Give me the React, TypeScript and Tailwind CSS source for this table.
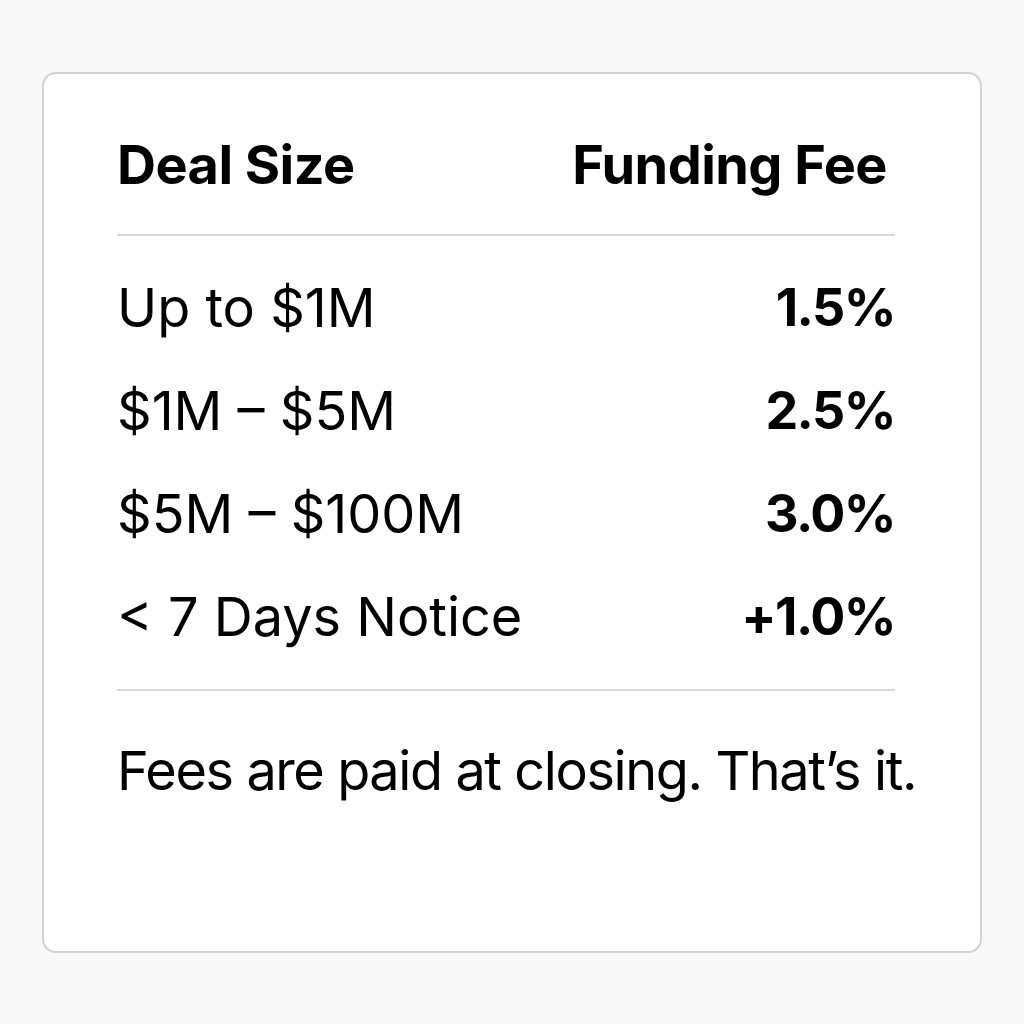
const rows = [
  { size: "Up to $1M", fee: "1.5%" },
  { size: "$1M – $5M", fee: "2.5%" },
  { size: "$5M – $100M", fee: "3.0%" },
  { size: "< 7 Days Notice", fee: "+1.0%" },
]

export default function App() {
  return (
    <div className="h-[1024px] w-[1024px] overflow-hidden bg-[#f8f8f8] pt-[72px] pl-[42px] font-['Inter',sans-serif] text-black">
      <div className="h-[881px] w-[940px] rounded-[14px] border-2 border-[#d2d2d2] bg-white pl-[73px] pr-[85px] pt-[61px]">
        <div className="flex items-center justify-between text-[54px] font-bold leading-[60px] tracking-[-0.01em]">
          <span>Deal Size</span>
          <span className="pr-[8px]">Funding Fee</span>
        </div>
        <div className="mt-[39px] h-[2px] bg-[#d9d9d9]" />
        <div className="mt-[20px]">
          {rows.map((r) => (
            <div key={r.size} className="flex items-center justify-between text-[54px] leading-[103px]">
              <span>{r.size}</span>
              <span className="text-[52px] font-bold tracking-[-0.03em]">{r.fee}</span>
            </div>
          ))}
        </div>
        <div className="mt-[21px] h-[2px] bg-[#d9d9d9]" />
        <p className="mt-[50px] whitespace-nowrap text-[54px] leading-[60px] tracking-[-0.026em]">Fees are paid at closing. That’s it.</p>
      </div>
    </div>
  )
}
